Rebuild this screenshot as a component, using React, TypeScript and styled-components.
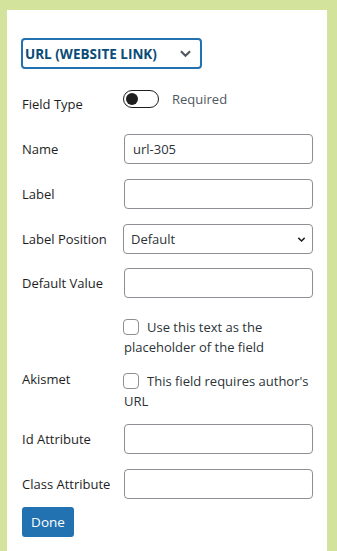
import React from "react";
import styled, { createGlobalStyle } from "styled-components";

const GlobalStyle = createGlobalStyle`
  html, body {
    margin: 0;
    padding: 0;
    background: #d4e39b;
  }
  body {
    font-family: "Open Sans", "Noto Sans", sans-serif;
    font-size: 13px;
    color: #1e1e1e;
  }
`;

const Page = styled.div`
  height: 551px;
  padding: 10px 10px 0 7px;
  box-sizing: border-box;
  overflow: hidden;
`;

const Panel = styled.div`
  width: 320px;
  height: 100%;
  background: #fff;
  box-sizing: border-box;
  padding: 28px 14px 0 15px;
`;

const TypeSelect = styled.div`
  width: 181px;
  height: 31px;
  box-sizing: border-box;
  border: 2px solid #2271b1;
  border-radius: 4px;
  display: flex;
  align-items: center;
  justify-content: space-between;
  padding: 0 8px 0 2px;
  margin-left: -1px;
  font-weight: 700;
  font-size: 13.5px;
  color: #0a4b78;
  margin-bottom: 20px;
`;

const Row = styled.div<{ $gap?: number }>`
  display: flex;
  align-items: flex-start;
  margin-bottom: ${(p) => p.$gap ?? 15}px;
`;

const Label = styled.div<{ $height?: number; $shift?: number }>`
  width: 102px;
  flex: none;
  height: ${(p) => p.$height ?? 30}px;
  line-height: ${(p) => p.$height ?? 30}px;
  margin-top: ${(p) => p.$shift ?? 0}px;
  white-space: nowrap;
  color: #1e1e1e;
`;

const Control = styled.div`
  width: 189px;
  flex: none;
`;

const Input = styled.div`
  height: 30px;
  box-sizing: border-box;
  border: 1px solid #8c8f94;
  border-radius: 4px;
  padding: 0 8px;
  line-height: 28px;
  color: #2c3338;
  background: #fff;
`;

const Select = styled(Input)`
  display: flex;
  align-items: center;
  justify-content: space-between;
  margin-left: -1px;
  padding: 0 6px 0 7px;
`;

const ToggleWrap = styled.div`
  display: flex;
  align-items: center;
  gap: 13px;
  margin-top: 1px;
  margin-left: -1px;
  color: #50575e;
`;

const Toggle = styled.div`
  width: 36px;
  height: 18px;
  box-sizing: border-box;
  border: 1px solid #1e1e1e;
  border-radius: 9px;
  position: relative;
  &::after {
    content: "";
    position: absolute;
    left: 2px;
    top: 2px;
    width: 12px;
    height: 12px;
    border-radius: 50%;
    background: #1e1e1e;
  }
`;

const CheckText = styled.div`
  line-height: 20px;
  color: #2c3338;
`;

const Box = styled.span`
  display: inline-block;
  width: 16px;
  height: 16px;
  box-sizing: border-box;
  border: 1px solid #8c8f94;
  border-radius: 4px;
  vertical-align: -3px;
  margin: 0 8px 0 -1px;
`;

const Button = styled.button`
  display: block;
  width: 52px;
  height: 30px;
  border: none;
  border-radius: 3px;
  background: #2271b1;
  color: #fff;
  font-family: inherit;
  font-size: 13.5px;
  padding: 0;
`;

const Chevron = ({ size = 10, color = "#50575e" }: { size?: number; color?: string }) => (
  <svg width={size} height={size} viewBox="0 0 10 10">
    <path d="M1.5 3.2 L5 6.7 L8.5 3.2" fill="none" stroke={color} strokeWidth="1.6" />
  </svg>
);

export default function App() {
  return (
    <>
      <GlobalStyle />
      <Page>
        <Panel>
          <TypeSelect>
            <span>URL (WEBSITE LINK)</span>
            <Chevron size={13} />
          </TypeSelect>

          <Row>
            <Label>Field Type</Label>
            <Control>
              <ToggleWrap>
                <Toggle />
                <span>Required</span>
              </ToggleWrap>
            </Control>
          </Row>

          <Row>
            <Label>Name</Label>
            <Control>
              <Input>url-305</Input>
            </Control>
          </Row>

          <Row>
            <Label>Label</Label>
            <Control>
              <Input />
            </Control>
          </Row>

          <Row $gap={14}>
            <Label>Label Position</Label>
            <Control>
              <Select>
                <span>Default</span>
                <Chevron size={9} color="#1e1e1e" />
              </Select>
            </Control>
          </Row>

          <Row $gap={19}>
            <Label>Default Value</Label>
            <Control>
              <Input />
            </Control>
          </Row>

          <Row $gap={14}>
            <Label />
            <Control>
              <CheckText>
                <Box />
                Use this text as the placeholder of the field
              </CheckText>
            </Control>
          </Row>

          <Row $gap={13}>
            <Label $height={20} $shift={-2}>Akismet</Label>
            <Control>
              <CheckText>
                <Box />
                This field requires author's URL
              </CheckText>
            </Control>
          </Row>

          <Row>
            <Label>Id Attribute</Label>
            <Control>
              <Input />
            </Control>
          </Row>

          <Row $gap={8}>
            <Label>Class Attribute</Label>
            <Control>
              <Input />
            </Control>
          </Row>

          <Button>Done</Button>
        </Panel>
      </Page>
    </>
  );
}
